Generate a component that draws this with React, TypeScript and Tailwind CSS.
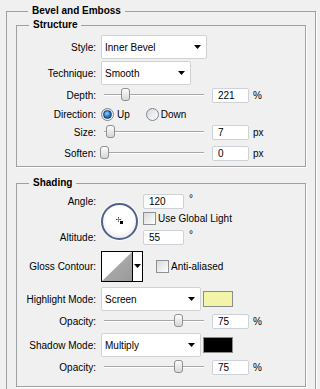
import React from "react";

const cn = (...c: (string | false | undefined)[]) => c.filter(Boolean).join(" ");

function Group({ title, className, children }: { title: string; className?: string; children: React.ReactNode }) {
  return (
    <fieldset className={cn("border border-[#a0a0a0] shadow-[1px_1px_0_#fff]", className)}>
      <legend className="ml-[12px] px-[4px] text-[10px] font-bold leading-[12px] text-black">{title}</legend>
      {children}
    </fieldset>
  );
}

function Label({ children }: { children: React.ReactNode }) {
  return <div className="w-[79px] shrink-0 text-right leading-[15px]">{children}</div>;
}

function Arrow() {
  return (
    <svg width="7" height="4" viewBox="0 0 7 4">
      <polygon points="0,0 7,0 3.5,4" fill="#000" />
    </svg>
  );
}

function Select({ value, width }: { value: string; width: string }) {
  return (
    <div className={cn("ml-[5px] flex h-[24px] items-center justify-between rounded-[2px] border border-[#d2d2d2] bg-white pl-[3px] pr-[5px]", width)}>
      <span>{value}</span>
      <Arrow />
    </div>
  );
}

function NumInput({ value, className }: { value: string; className?: string }) {
  return (
    <div className={cn("flex h-[15px] w-[37px] items-center rounded-[2px] border border-[#cdd2d8] bg-white pl-[5px] leading-[13px]", className)}>
      {value}
    </div>
  );
}

function Slider({ pos }: { pos: number }) {
  return (
    <div className="relative ml-[5px] h-[16px] w-[107px] shrink-0">
      <div className="absolute left-[3px] right-[4px] top-[7px] h-[2px] border-t border-[#a6a6a6] bg-white" />
      <div
        className="absolute top-[1px] h-[13px] w-[9px] rounded-[3px] border border-[#8d8f91] bg-gradient-to-b from-[#fdfdfd] to-[#d6d6d6]"
        style={{ left: pos }}
      />
    </div>
  );
}

function SliderRow({ label, pos, value, unit, className }: { label: string; pos: number; value: string; unit: string; className?: string }) {
  return (
    <div className={cn("flex h-[16px] items-center", className)}>
      <Label>{label}</Label>
      <Slider pos={pos} />
      <NumInput value={value} className="ml-[4px]" />
      <span className="ml-[4px]">{unit}</span>
    </div>
  );
}

function Radio({ checked }: { checked?: boolean }) {
  return (
    <span className="flex h-[13px] w-[13px] items-center justify-center rounded-full border border-[#7b8794] bg-gradient-to-br from-[#d8d8d8] to-white">
      {checked && (
        <span className="h-[9px] w-[9px] rounded-full border border-[#1b3c66] bg-[radial-gradient(circle_at_40%_35%,#8fd0ff,#1d6cb5_60%,#0b3f78)]" />
      )}
    </span>
  );
}

function Check() {
  return <span className="h-[13px] w-[13px] shrink-0 border border-[#8e9092] bg-gradient-to-br from-[#d9d9d9] to-white" />;
}

function Dial() {
  return (
    <div className="ml-[5px] mt-[9px] h-[37px] w-[37px] shrink-0 rounded-full border-2 border-[#53628a] bg-[radial-gradient(circle_at_50%_40%,#ffffff_50%,#dedede)] shadow-[0_0_0_1px_#fafafa]">
      <svg width="33" height="33" viewBox="0 0 33 33">
        <g fill="#555">
          <rect x="13" y="14" width="1" height="1" />
          <rect x="17" y="14" width="1" height="1" />
          <rect x="15" y="12" width="1" height="1" />
          <rect x="15" y="16" width="1" height="1" />
          <rect x="14" y="14" width="3" height="1" fill="#888" />
          <rect x="15" y="13" width="1" height="3" fill="#888" />
        </g>
        <rect x="17" y="16" width="3" height="3" fill="#000" />
      </svg>
    </div>
  );
}

function Contour() {
  return (
    <div className="ml-[5px] flex h-[31px] w-[42px] border border-black bg-white">
      <svg width="30" height="29" viewBox="0 0 30 29">
        <defs>
          <linearGradient id="g" x1="0" y1="0" x2="1" y2="1">
            <stop offset="0" stopColor="#b4b4b4" />
            <stop offset="1" stopColor="#9a9a9a" />
          </linearGradient>
        </defs>
        <polygon points="0,29 30,0 30,29" fill="url(#g)" />
      </svg>
      <div className="flex w-[10px] items-center justify-center border-l border-black pb-[2px]">
        <Arrow />
      </div>
    </div>
  );
}

export default function App() {
  return (
    <div className="h-[389px] w-[320px] overflow-hidden bg-[#f0f0f0] pt-[5px] font-['Liberation_Sans',Arial,sans-serif] text-[10px] text-black">
      <Group title="Bevel and Emboss" className="ml-[6px] w-[310px] px-[9px] pb-[20px] pt-[2px]">
        <Group title="Structure" className="pb-[5px]">
          <div className="mt-[4px] flex h-[24px] items-center">
            <Label>Style:</Label>
            <Select value="Inner Bevel" width="w-[106px]" />
          </div>
          <div className="mt-[2px] flex h-[24px] items-center">
            <Label>Technique:</Label>
            <Select value="Smooth" width="w-[90px]" />
          </div>
          <SliderRow label="Depth:" pos={20} value="221" unit="%" className="mt-[2px]" />
          <div className="mt-[3px] flex h-[16px] items-center">
            <Label>Direction:</Label>
            <div className="ml-[5px] flex items-center gap-[3px]">
              <Radio checked />
              <span>Up</span>
            </div>
            <div className="ml-[16px] flex items-center gap-[2px]">
              <Radio />
              <span>Down</span>
            </div>
          </div>
          <SliderRow label="Size:" pos={5} value="7" unit="px" className="mt-[2px]" />
          <SliderRow label="Soften:" pos={-1} value="0" unit="px" className="mt-[5px]" />
        </Group>

        <Group title="Shading" className="mt-[10px] pb-[11px]">
          <div className="mt-[5px] flex h-[51px]">
            <div className="flex w-[79px] shrink-0 flex-col justify-between text-right leading-[15px]">
              <div>Angle:</div>
              <div>Altitude:</div>
            </div>
            <Dial />
            <div className="ml-[5px] flex flex-col">
              <div className="flex items-start">
                <NumInput value="120" className="w-[41px]" />
                <span className="ml-[5px] leading-[10px]">°</span>
              </div>
              <div className="mt-[3px] flex h-[13px] items-center">
                <Check />
                <span className="ml-[2px]">Use Global Light</span>
              </div>
              <div className="mt-[5px] flex items-start">
                <NumInput value="55" className="w-[41px]" />
                <span className="ml-[5px] leading-[10px]">°</span>
              </div>
            </div>
          </div>

          <div className="mt-[6px] flex h-[31px] items-center">
            <Label>Gloss Contour:</Label>
            <Contour />
            <div className="ml-[13px] flex items-center">
              <Check />
              <span className="ml-[2px]">Anti-aliased</span>
            </div>
          </div>

          <div className="mt-[5px] flex h-[24px] items-center">
            <Label>Highlight Mode:</Label>
            <Select value="Screen" width="w-[100px]" />
            <div className="ml-[2px] h-[16px] w-[30px] border border-[#8c8c8c] bg-[#f1f4a9]" />
          </div>
          <SliderRow label="Opacity:" pos={73} value="75" unit="%" className="mt-[2px]" />
          <div className="mt-[4px] flex h-[24px] items-center">
            <Label>Shadow Mode:</Label>
            <Select value="Multiply" width="w-[100px]" />
            <div className="ml-[2px] h-[16px] w-[30px] border border-[#8c8c8c] bg-black" />
          </div>
          <SliderRow label="Opacity:" pos={73} value="75" unit="%" className="mt-[2px]" />
        </Group>
      </Group>
    </div>
  );
}
